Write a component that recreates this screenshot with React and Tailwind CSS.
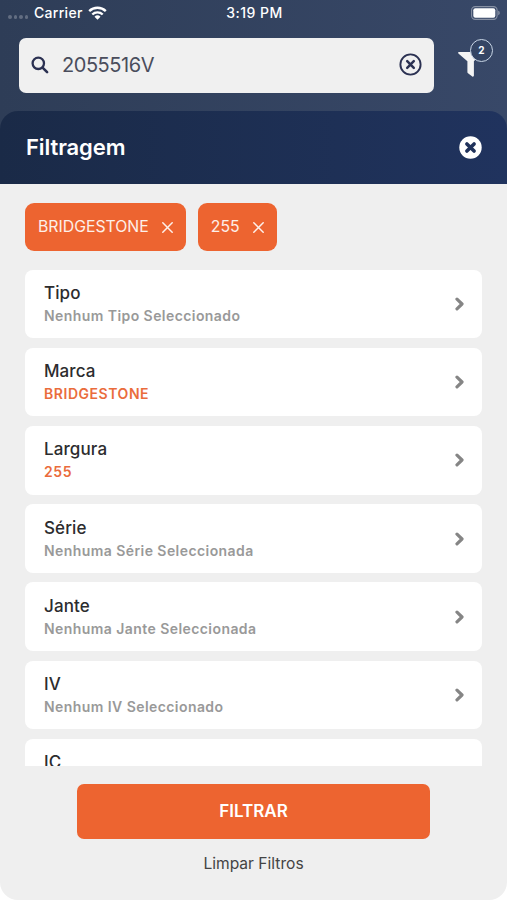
import React, { useState } from 'react';

const FILTERS = [
  { id: 'tipo', label: 'Tipo', value: '', empty: 'Nenhum Tipo Seleccionado' },
  { id: 'marca', label: 'Marca', value: 'BRIDGESTONE', empty: 'Nenhuma Marca Seleccionada' },
  { id: 'largura', label: 'Largura', value: '255', empty: 'Nenhuma Largura Seleccionada' },
  { id: 'serie', label: 'Série', value: '', empty: 'Nenhuma Série Seleccionada' },
  { id: 'jante', label: 'Jante', value: '', empty: 'Nenhuma Jante Seleccionada' },
  { id: 'iv', label: 'IV', value: '', empty: 'Nenhum IV Seleccionado' },
  { id: 'ic', label: 'IC', value: '', empty: '' },
];

function StatusBar() {
  return (
    <div className="grid grid-cols-3 items-center h-[26px] pl-2 pr-[6px] text-white text-[14px] font-medium leading-none">
      <div className="flex items-center">
        <div className="flex gap-[2px] mt-[8px] mr-[6px]">
          {[0, 1, 2, 3].map(i => (
            <span key={i} className="w-[3.5px] h-[3.5px] rounded-full bg-white/25" />
          ))}
        </div>
        <span className="tracking-[0.3px]">Carrier</span>
        <svg className="ml-[5px]" width="19" height="14" viewBox="0 0 19 14" fill="none" stroke="white" strokeWidth="2.4">
          <path d="M1.2 5.2a11.8 11.8 0 0 1 16.6 0" />
          <path d="M4.3 8.5a7.4 7.4 0 0 1 10.4 0" />
          <path d="M9.5 13.8 6.5 10.8a4.3 4.3 0 0 1 6 0z" fill="white" stroke="none" />
        </svg>
      </div>
      <span className="text-center tracking-[0.5px]">3:19 PM</span>
      <svg className="justify-self-end" width="31" height="14" viewBox="0 0 31 14">
        <rect x="1.6" y="0.6" width="25.5" height="12.8" rx="3.6" fill="none" stroke="white" strokeOpacity="0.4" strokeWidth="1.1" />
        <rect x="3.3" y="2.3" width="22" height="9.4" rx="2" fill="white" />
        <path d="M28.4 4.8c1.6.5 1.6 3.9 0 4.4z" fill="white" fillOpacity="0.5" />
      </svg>
    </div>
  );
}

function SearchRow({ query, count }) {
  return (
    <div className="flex items-start pl-[19px] pt-[12px]">
      <div className="flex items-center w-[415px] h-[55px] rounded-[7px] bg-[#f0f0f0] pl-[12px] pr-[12px] pb-[2px] text-[#2b3152]">
        <svg width="18" height="18" viewBox="0 0 18 18" fill="none" stroke="currentColor" strokeLinecap="round">
          <circle cx="7.3" cy="7.3" r="5.7" strokeWidth="2.3" />
          <path d="m11.8 11.8 4.3 4.3" strokeWidth="2.6" />
        </svg>
        <span className="ml-[13px] flex-1 text-[20px] leading-none text-[#4a4d5c] tracking-[-0.45px]">{query}</span>
        <svg width="23" height="23" viewBox="0 0 23 23" fill="none" stroke="currentColor" strokeLinecap="round">
          <circle cx="11.5" cy="11.5" r="10.1" strokeWidth="1.9" />
          <path d="m8.2 8.2 6.6 6.6M14.8 8.2l-6.6 6.6" strokeWidth="2.5" />
        </svg>
      </div>
      <div className="relative ml-[24px] mt-[1px] w-[35px] h-[38px] pt-[13px]">
        <svg width="25" height="25" viewBox="0 0 25 25" fill="#f4f4f4">
          <path d="M0.9 0H22.6c.9 0 1.2.9.6 1.5L15.9 9.2V23.6c0 1-.9 1.4-1.6.9l-4.3-3.2c-.4-.3-.6-.7-.6-1.1V9.2L.4 1.5C-.2.9.1 0 .9 0z" />
        </svg>
        <span className="absolute left-[12px] top-0 size-[23px] rounded-full border-[1.5px] border-[#c9d6e6] bg-[#344564] flex items-center justify-center text-[10px] font-bold text-white">
          {count}
        </span>
      </div>
    </div>
  );
}

function Chip({ label }) {
  return (
    <button className="flex items-center h-[48.5px] rounded-[9px] bg-[#ed6430] pl-[13px] pr-[12.5px] pt-px text-white/90 text-[15.8px]">
      <span>{label}</span>
      <svg className="ml-[13.5px]" width="11" height="11" viewBox="0 0 11 11" stroke="currentColor" strokeWidth="1.5" strokeLinecap="round">
        <path d="m.8.8 9.4 9.4M10.2.8.8 10.2" />
      </svg>
    </button>
  );
}

function FilterRow({ label, value, empty }) {
  return (
    <div className="flex items-center justify-between shrink-0 h-[68.5px] rounded-[8px] bg-white pl-[19px] pr-[17px]">
      <div>
        <div className="pt-px text-[17px] leading-[23px] font-medium text-[#2c2c2e] tracking-[0.1px]">{label}</div>
        <div className={value ? 'text-[14px] leading-[22px] h-[22px] font-semibold tracking-[0.55px] text-[#ea6c3c]' : 'text-[14px] leading-[22px] h-[22px] font-semibold tracking-[0.43px] text-[#999999]'}>
          {value || empty}
        </div>
      </div>
      <svg width="11" height="14" viewBox="0 0 11 14" fill="none" stroke="#858585" strokeWidth="3.2" strokeLinecap="round" strokeLinejoin="round">
        <path d="m3 2.2 5 4.8-5 4.8" />
      </svg>
    </div>
  );
}

export default function App() {
  const [filters, setFilters] = useState(FILTERS);
  const active = filters.filter(f => f.value);

  const handleClear = () => {
    setFilters(filters.map(f => ({ ...f, value: '' })));
  };

  return (
    <div className="w-[507px] h-[900px] overflow-hidden flex flex-col bg-white font-['Inter',sans-serif]">
      {/* Top bar, continues behind the rounded corners of the sheet */}
      <div className="shrink-0 h-[134px] bg-linear-to-r from-[#2e3d57] to-[#384868]">
        <StatusBar />
        <SearchRow query="2055516V" count={active.length} />
      </div>

      <div className="relative -mt-[23px] flex-1 min-h-0 flex flex-col">
        <header className="shrink-0 flex items-center justify-between h-[73px] rounded-t-[18px] pl-[26px] pr-[25px] bg-linear-to-r from-[#1a2a47] to-[#20335e]">
          <h1 className="text-[22px] font-semibold text-white tracking-[-0.1px]">Filtragem</h1>
          <svg width="23" height="23" viewBox="0 0 23 23">
            <circle cx="11.5" cy="11.5" r="11.2" fill="white" />
            <path d="m7.9 7.9 7.2 7.2M15.1 7.9l-7.2 7.2" stroke="#20325b" strokeWidth="3.6" strokeLinecap="round" />
          </svg>
        </header>

        <div className="flex-1 min-h-0 flex flex-col rounded-b-[18px] bg-[#efefef]">
          <div className="shrink-0 flex gap-[12px] px-[25px] pt-[18.5px]">
            {active.map(f => <Chip key={f.id} label={f.value} />)}
          </div>

          {/* Filter list, cut at the footer */}
          <div className="mt-[18.7px] h-[496.3px] shrink-0 px-[25px] flex flex-col gap-[9.7px] overflow-hidden">
            {filters.map(f => <FilterRow key={f.id} {...f} />)}
          </div>

          <div className="flex flex-col items-center pt-[18px]">
            <button className="w-[353px] h-[55px] rounded-[7px] bg-[#ed6430] text-white text-[17px] font-semibold">FILTRAR</button>
            <button onClick={handleClear} className="mt-[12px] text-[15.6px] leading-[25px] text-[#444444]">Limpar Filtros</button>
          </div>
        </div>
      </div>
    </div>
  );
}
